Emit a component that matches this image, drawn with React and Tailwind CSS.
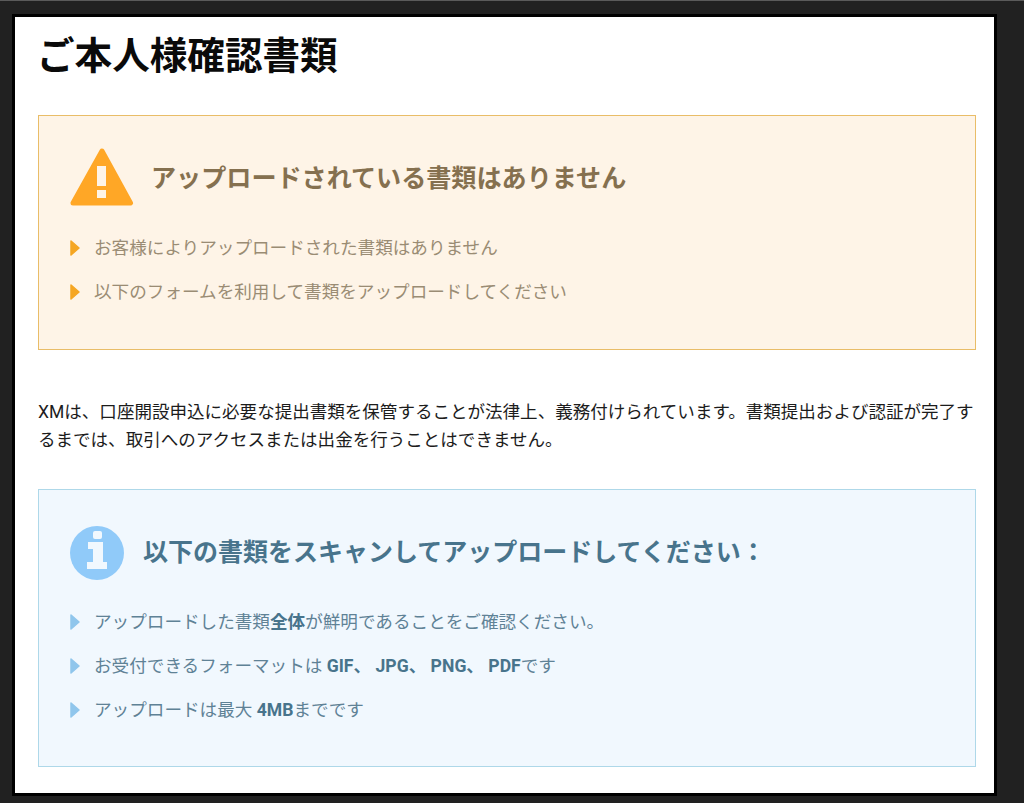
const font = "font-['Roboto','Noto_Sans_CJK_JP',sans-serif]";

function Arrow({ color }) {
  return (
    <svg width="10" height="16" viewBox="0 0 10 16" className="shrink-0">
      <path
        d="M1 1 L9 8 L1 15 Z"
        fill={color}
        stroke={color}
        strokeWidth="1.5"
        strokeLinejoin="round"
      />
    </svg>
  );
}

function WarningIcon() {
  return (
    <svg width="64" height="60" viewBox="0 0 64 60" className="shrink-0">
      <path
        d="M32 3 L60.5 55 H3 Z"
        fill="#ffa726"
        stroke="#ffa726"
        strokeWidth="5"
        strokeLinejoin="round"
      />
      <rect x="27" y="18" width="9" height="20" fill="#fef4e7" />
      <rect x="27" y="42" width="9" height="8" fill="#fef4e7" />
    </svg>
  );
}

function InfoIcon() {
  return (
    <svg width="54" height="54" viewBox="0 0 54 54" className="shrink-0">
      <circle cx="27" cy="27" r="27" fill="#90caf9" />
      <rect x="23" y="5" width="9" height="8" rx="2" fill="#f1f8fe" />
      <path d="M18 16 H33 V36 H37 V43 H17 V36 H23 V23 H18 Z" fill="#f1f8fe" />
    </svg>
  );
}

function Item({ color, className, children }) {
  return (
    <li className={`flex items-center gap-[14px] h-[44px] text-[17.6px] ${className}`}>
      <Arrow color={color} />
      <span>{children}</span>
    </li>
  );
}

export default function App() {
  return (
    <div className={`${font} w-[1024px] h-[803px] bg-[#212121] border-t border-[#5a5a5a] pt-[13px] pl-[12px] overflow-hidden`}>
      <div className="w-[985px] h-[782px] border-[3.5px] border-black bg-white pl-[23px] pr-[18px]">
        <h1 className="text-[37.6px] leading-[44px] font-bold text-[#0a0a0a] pt-[17px] h-[98px] -ml-[1px]">
          ご本人様確認書類
        </h1>

        {/* warning box */}
        <div className="h-[235px] border border-[#e9bd68] bg-[#fef4e7] pl-[31px] pt-[31px]">
          <div className="flex items-center gap-[17px] h-[62px]">
            <WarningIcon />
            <h2 className="text-[25.1px] font-bold text-[#85704f] relative top-[1px]">
              アップロードされている書類はありません
            </h2>
          </div>
          <ul className="mt-[17px]">
            <Item color="#f5a623" className="text-[#9a8c74]">
              お客様によりアップロードされた書類はありません
            </Item>
            <Item color="#f5a623" className="text-[#9a8c74]">
              以下のフォームを利用して書類をアップロードしてください
            </Item>
          </ul>
        </div>

        <p className="mt-[48px] text-[17.55px] leading-[28px] text-[#1c1c1c]">
          XMは、口座開設申込に必要な提出書類を保管することが法律上、義務付けられています。書類提出および認証が完了するまでは、取引へのアクセスまたは出金を行うことはできません。
        </p>

        {/* info box */}
        <div className="mt-[35px] h-[278px] border border-[#aed8e9] bg-[#f1f8fe] pl-[31px] pt-[36px]">
          <div className="flex items-center gap-[19px] h-[54px]">
            <InfoIcon />
            <h2 className="text-[25px] font-bold text-[#48748c]">
              以下の書類をスキャンしてアップロードしてください：
            </h2>
          </div>
          <ul className="mt-[20px]">
            <Item color="#90c6ec" className="text-[#5f8296]">
              <span>アップロードした書類<b className="text-[#48748c]">全体</b>が鮮明であることをご確認ください。</span>
            </Item>
            <Item color="#90c6ec" className="text-[#5f8296]">
              <span>
                お受付できるフォーマットは <b className="text-[#48748c]">GIF、 JPG、 PNG、 PDF</b>です
              </span>
            </Item>
            <Item color="#90c6ec" className="text-[#5f8296]">
              <span>アップロードは最大 <b className="text-[#48748c]">4MB</b>までです</span>
            </Item>
          </ul>
        </div>
      </div>
    </div>
  );
}
